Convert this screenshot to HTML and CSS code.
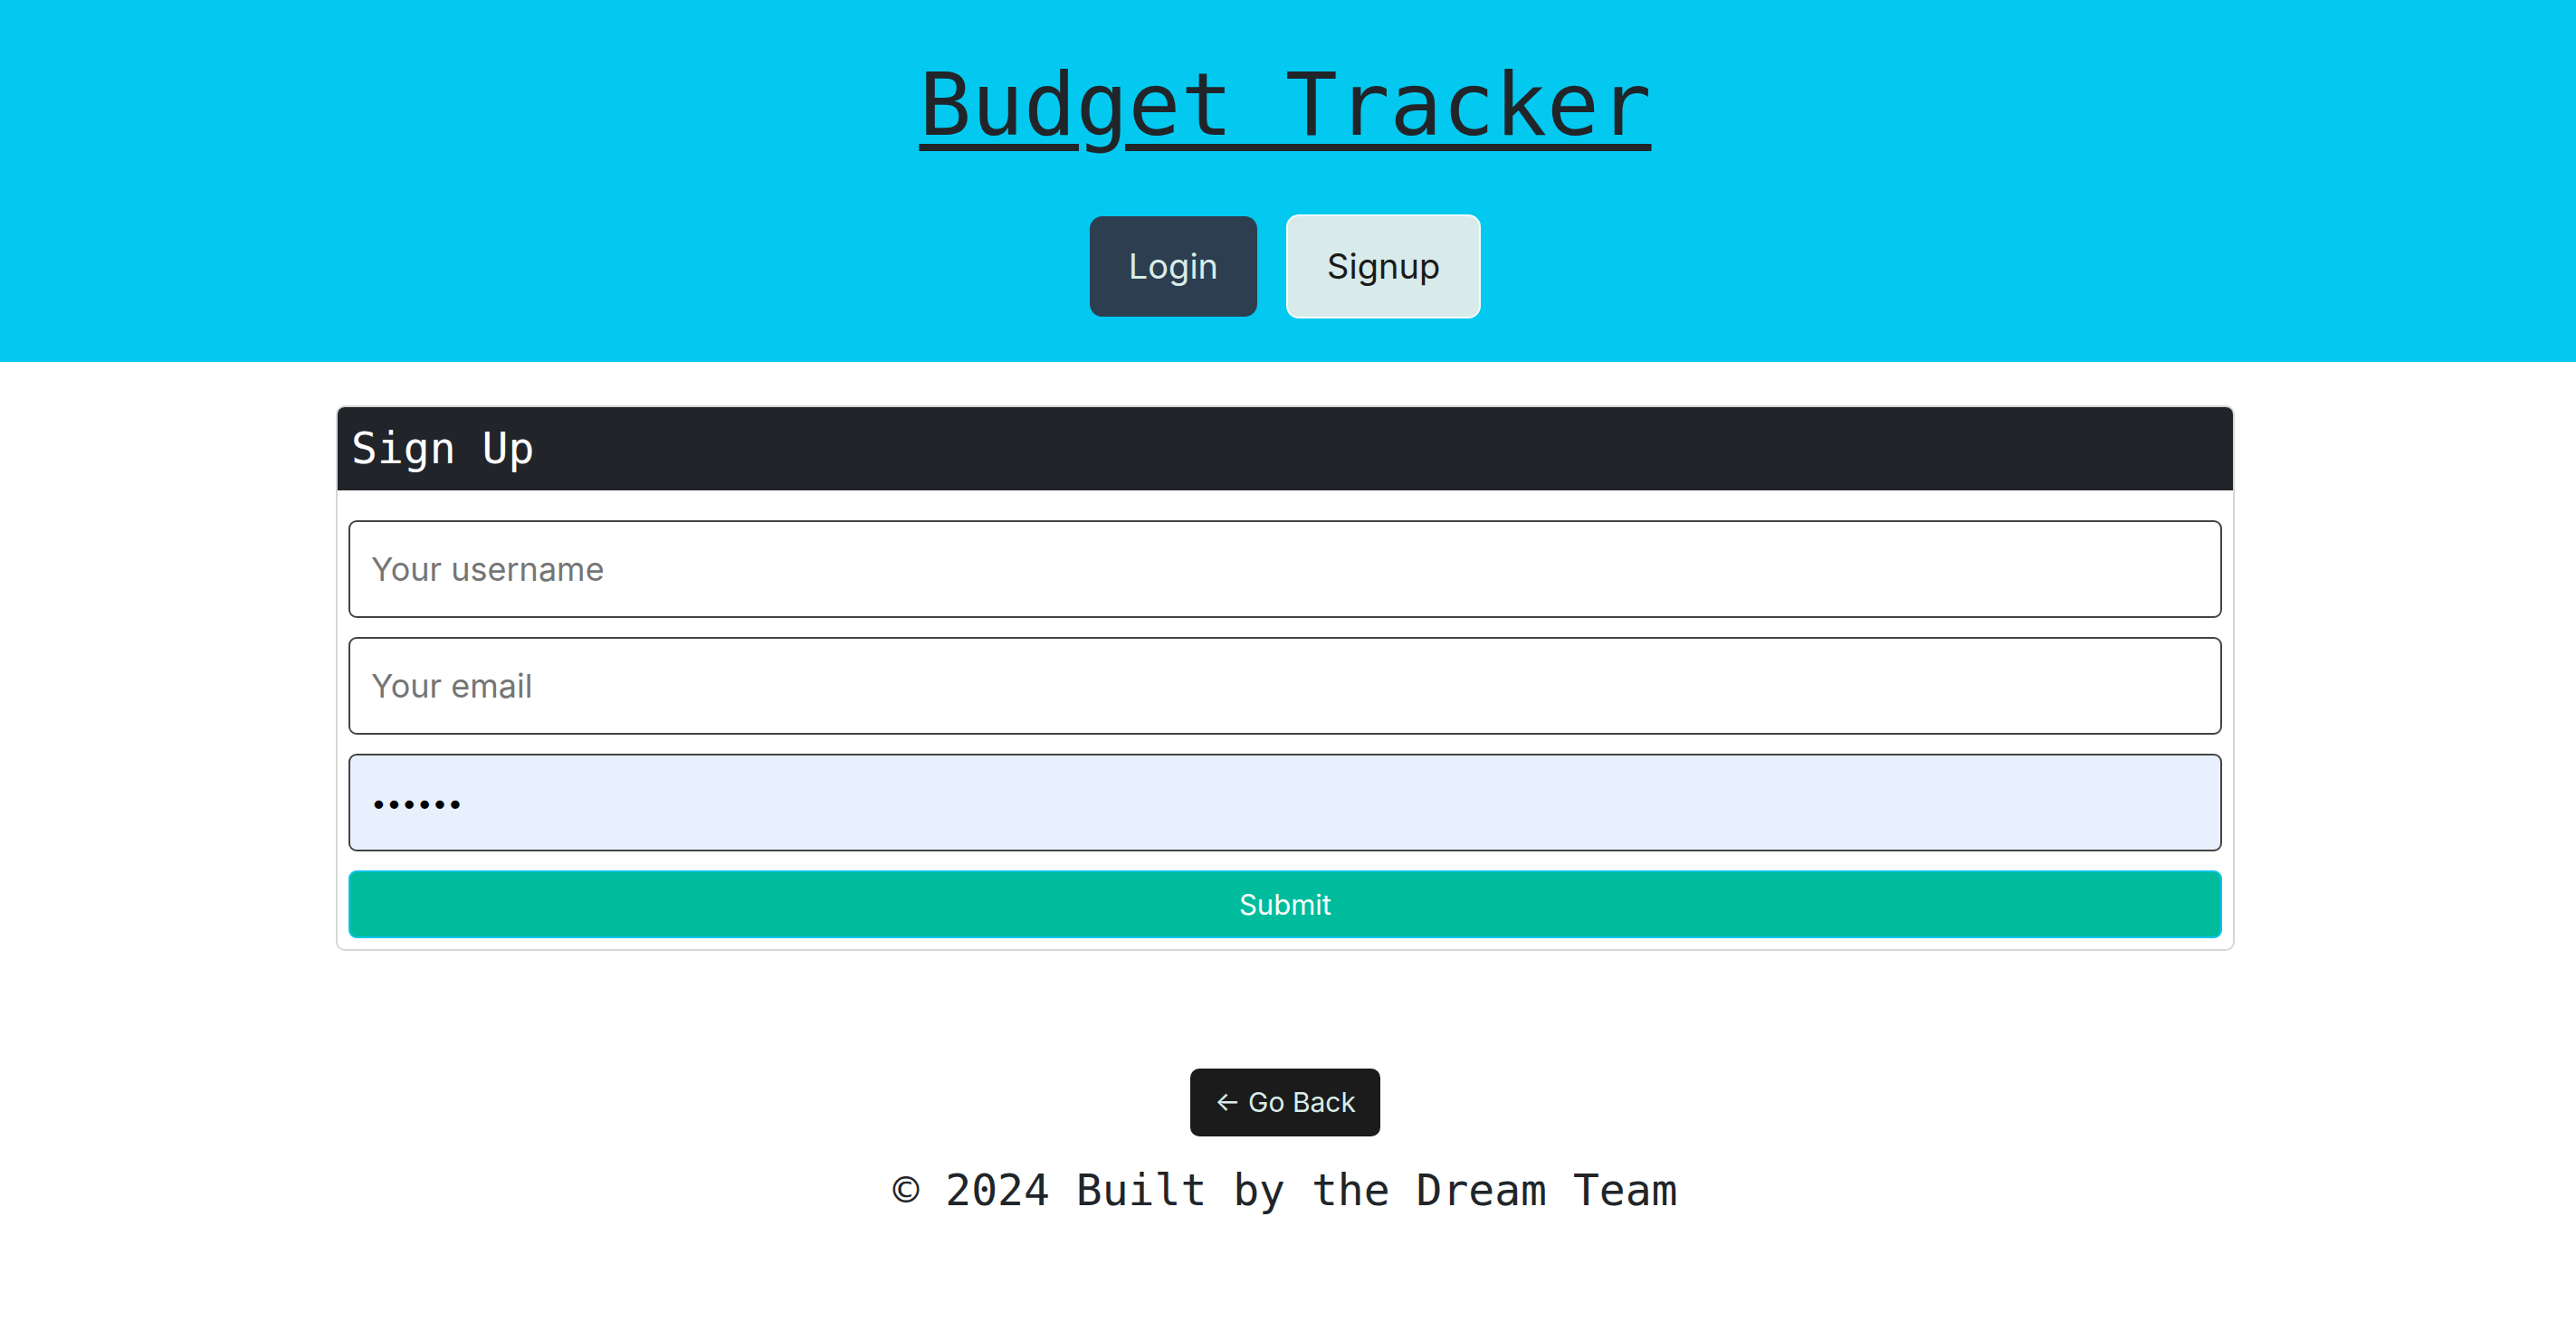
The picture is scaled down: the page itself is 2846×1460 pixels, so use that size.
FILE: index.html
```html
<!DOCTYPE html>
<html lang="en">
<head>
<meta charset="utf-8">
<title>Budget Tracker</title>
<link rel="stylesheet" href="styles.css">
</head>
<body>
<header class="hero">
  <h1 class="title"><a href="#" class="title-link">Budget Tracker</a></h1>
  <nav class="auth-nav">
    <button class="btn btn-login" type="button">Login</button>
    <button class="btn btn-signup" type="button">Signup</button>
  </nav>
</header>
<main class="page-main">
  <section class="card">
    <h4 class="card-header">Sign Up</h4>
    <form class="card-body">
      <input class="field" type="text" placeholder="Your username">
      <input class="field" type="email" placeholder="Your email">
      <input class="field field-filled" type="password" value="123456">
      <button class="btn-submit" type="button">Submit</button>
    </form>
  </section>
</main>
<footer class="footer">
  <button class="btn-back" type="button">&larr; Go Back</button>
  <p class="credit">&copy; 2024 Built by the Dream Team</p>
</footer>
</body>
</html>
```
FILE: styles.css
```css
* { box-sizing: border-box; }

body {
  margin: 0;
  background: #ffffff;
  font-family: Inter, "Noto Sans", "Liberation Sans", sans-serif;
  color: #212529;
}

.hero {
  background: #03c9f0;
  padding: 60px 6px 48px 0;
  display: flex;
  flex-direction: column;
  align-items: center;
}

.title {
  margin: 0;
  font-family: "DejaVu Sans Mono", monospace;
  font-weight: 400;
  font-size: 96px;
  line-height: 112px;
}

.title-link {
  color: #212529;
  text-decoration: underline;
  text-decoration-thickness: 8px;
  text-underline-offset: 10px;
}

.auth-nav {
  margin-top: 65px;
  display: flex;
  align-items: center;
  gap: 32px;
}

.btn {
  font-family: Inter, "Noto Sans", sans-serif;
  font-size: 38px;
  line-height: 47px;
  padding: 32px 43px;
  border-radius: 14px;
  border: 0;
  cursor: pointer;
}

.btn-login {
  background: #2d3e50;
  color: #d8ece8;
}

.btn-signup {
  background: #d8eaea;
  color: #1a1a1a;
  border: 2px solid #f2fbfb;
}

.page-main {
  padding-right: 6px;
  margin-top: 48px;
  display: flex;
  justify-content: center;
}

.card {
  width: 2098px;
  border: 2px solid #d6d6d6;
  border-radius: 10px;
  overflow: hidden;
}

.card-header {
  margin: 0;
  background: #212529;
  color: #ffffff;
  font-family: "DejaVu Sans Mono", monospace;
  font-weight: 400;
  font-size: 48px;
  line-height: 60px;
  padding: 15px 15px 17px;
}

.card-body {
  margin: 0;
  padding: 33px 12px 12px;
  display: flex;
  flex-direction: column;
  gap: 21px;
}

.field {
  height: 108px;
  border: 2px solid #444444;
  border-radius: 9px;
  padding: 0 23px;
  font-family: Inter, "Noto Sans", sans-serif;
  font-size: 36px;
  color: #000000;
  background: #ffffff;
  outline: none;
}

.field::placeholder {
  color: #757575;
}

.field-filled {
  background: #e8f0fe;
  font-size: 30px;
}

.btn-submit {
  height: 75px;
  border: 2px solid #0dc4ec;
  border-radius: 9px;
  background: #00bc9c;
  color: #ffffff;
  font-family: Inter, "Noto Sans", sans-serif;
  font-size: 31px;
  cursor: pointer;
}

.footer {
  margin-top: 130px;
  padding-right: 6px;
  display: flex;
  flex-direction: column;
  align-items: center;
}

.btn-back {
  background: #1b1b1b;
  color: #d8ece8;
  border: 0;
  border-radius: 10px;
  font-family: Inter, "Noto Sans", sans-serif;
  font-size: 30px;
  line-height: 39px;
  padding: 18px 27px;
  cursor: pointer;
}

.credit {
  margin: 31px 0 0;
  font-family: "DejaVu Sans Mono", monospace;
  font-size: 48px;
  line-height: 56px;
  color: #212529;
}
```
